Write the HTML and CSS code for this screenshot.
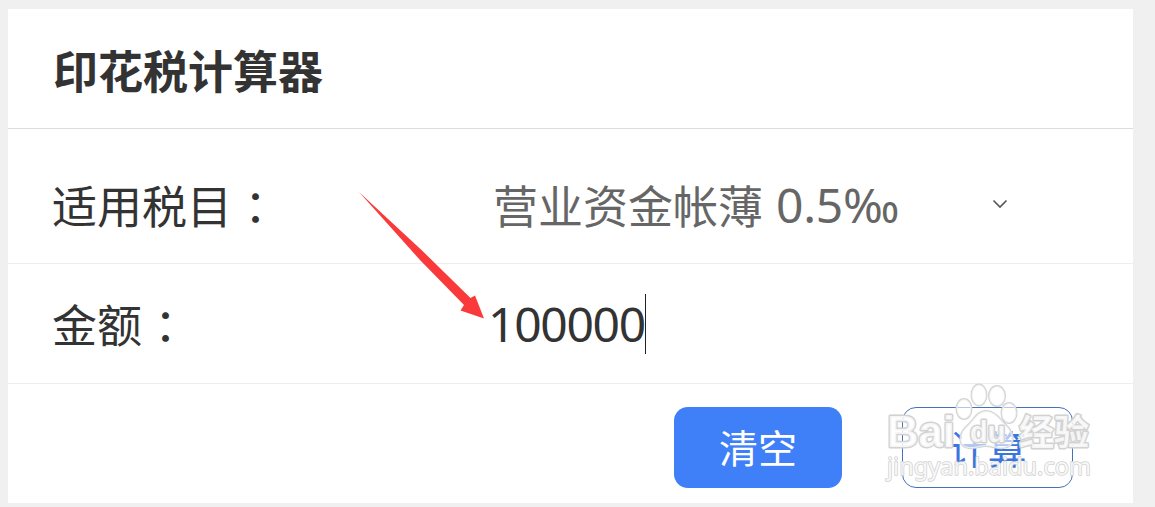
FILE: index.html
```html
<!DOCTYPE html>
<html lang="zh-CN">
<head>
    <meta charset="UTF-8">
    <meta name="viewport" content="width=device-width, initial-scale=1.0">
    <title>印花税计算器</title>
    <link rel="stylesheet" href="styles.css">
</head>
<body>
    <div class="calculator">
        <h1 class="title">印花税计算器</h1>

        <div class="row row-item">
            <span class="label">适用税目<span class="colon" lang="zh-TW">：</span></span>
            <div class="select">
                <span>营业资金帐薄</span>
                <span class="rate">0.5‰</span>
                <svg class="chevron" width="16" height="10" viewBox="0 0 16 10">
                    <path d="M1.5 1.5L8 8L14.5 1.5" fill="none" stroke="#555" stroke-width="1.6"/>
                </svg>
            </div>
        </div>

        <div class="row row-amount">
            <span class="label">金额<span class="colon" lang="zh-TW">：</span></span>
            <div class="amount">100000</div>
        </div>

        <div class="buttons">
            <button type="button" class="btn btn-clear">清空</button>
            <button type="button" class="btn btn-calc">计算</button>
        </div>
    </div>

    <!-- arrow pointing at the amount -->
    <svg class="arrow" width="130" height="132" viewBox="0 0 130 132">
        <path d="M1 1L64 59.5L112.500 107L117 104.500L126 127.500L102.500 119.500L106 114L62 69Z" fill="#fa3a3a"/>
    </svg>

    <!-- watermark -->
    <svg class="watermark" width="220" height="110" viewBox="880 378 220 110">
        <g class="mark">
            <text class="brand" x="887" y="447" textLength="68" lengthAdjust="spacingAndGlyphs">Bai</text>
            <ellipse cx="964" cy="409" rx="7.500" ry="10"/>
            <ellipse cx="979" cy="395" rx="7.500" ry="10.500"/>
            <ellipse cx="997" cy="396" rx="8" ry="10"/>
            <ellipse cx="1009" cy="413" rx="7.500" ry="10"/>
            <path d="M986 411C995 411 1000 419 1006 425C1015 434 1016 447 1003 448C996 449 992 446 986 446C980 446 976 449 969 448C957 447 959 434 966 427C974 420 977 411 986 411Z"/>
            <text class="du" x="970" y="442">du</text>
            <text class="cn" x="1019" y="445">经验</text>
            <text class="site" x="887" y="475" textLength="204" lengthAdjust="spacingAndGlyphs">jingyan.baidu.com</text>
        </g>
    </svg>
</body>
</html>
```

FILE: styles.css
```css
* {
    margin: 0;
    padding: 0;
    box-sizing: border-box;
}
body {
    position: relative;
    height: 507px;
    padding: 9px 22px 4px 8px;
    overflow: hidden;
    background: #f0f0f0;
    font-family: "Noto Sans CJK SC", sans-serif;
    color: #333;
}
.calculator {
    height: 494px;
    background: #fff;
}
.title {
    height: 120px;
    padding-left: 45px;
    border-bottom: 1px solid #dcdcdc;
    font-size: 45px;
    line-height: 121px;
}
.row {
    display: flex;
    align-items: center;
    padding-left: 44px;
    border-bottom: 1px solid #eee;
    font-size: 45px;
    line-height: 60px;
}
.row-item {
    height: 135px;
    padding-top: 17px;
}
.row-amount {
    height: 120px;
    padding-top: 1px;
}
.label {
    width: 436px;
}
.colon {
    display: inline-block;
    padding: 2px 0 0 1px;
    vertical-align: top;
    font-family: "Noto Sans CJK TC", sans-serif;
    line-height: 58px;
}
.select {
    display: flex;
    align-items: center;
    width: 530px;
    padding-left: 5px;
    color: #666;
}
.rate {
    margin-left: 13px;
    font-family: "Noto Sans", sans-serif;
    font-size: 48px;
    letter-spacing: -0.3px;
}
.chevron {
    margin-left: auto;
    margin-right: 10px;
    margin-bottom: 2px;
}
.amount {
    height: 60px;
    border-right: 1px solid #222;
    font-family: "Noto Sans", sans-serif;
    font-size: 48px;
    letter-spacing: -1.3px;
}
.buttons {
    display: flex;
    justify-content: flex-end;
    gap: 60px;
    padding: 23px 60px 0 0;
}
.btn {
    height: 81px;
    border-radius: 14px;
    font-family: "Noto Sans CJK SC", sans-serif;
    font-size: 39px;
    line-height: 79px;
}
.btn-clear {
    width: 168px;
    padding-bottom: 3px;
    border: none;
    background: #3f7ff8;
    color: #fff;
    line-height: 78px;
}
.btn-calc {
    width: 171px;
    border: 1px solid #4571b8;
    background: #fff;
    color: #3b76e0;
}
.arrow {
    position: absolute;
    left: 358px;
    top: 191px;
}
.watermark {
    position: absolute;
    left: 880px;
    top: 378px;
}
.mark {
    fill: rgba(255, 255, 255, 0.8);
    stroke: #d2d2d2;
    stroke-width: 3px;
    stroke-linejoin: round;
    paint-order: stroke;
}
.mark ellipse, .mark path {
    fill: rgba(255, 255, 255, 0.6);
    stroke-width: 2px;
}
.brand, .du {
    font-family: "Liberation Sans", sans-serif;
    font-weight: bold;
}
.brand {
    font-size: 45px;
}
.du {
    font-size: 29px;
}
.cn {
    font-family: "Noto Sans CJK SC", sans-serif;
    font-size: 35px;
    font-weight: bold;
}
.site {
    font-family: "Noto Sans", sans-serif;
    font-size: 23px;
    stroke-width: 1.5px;
}
```
